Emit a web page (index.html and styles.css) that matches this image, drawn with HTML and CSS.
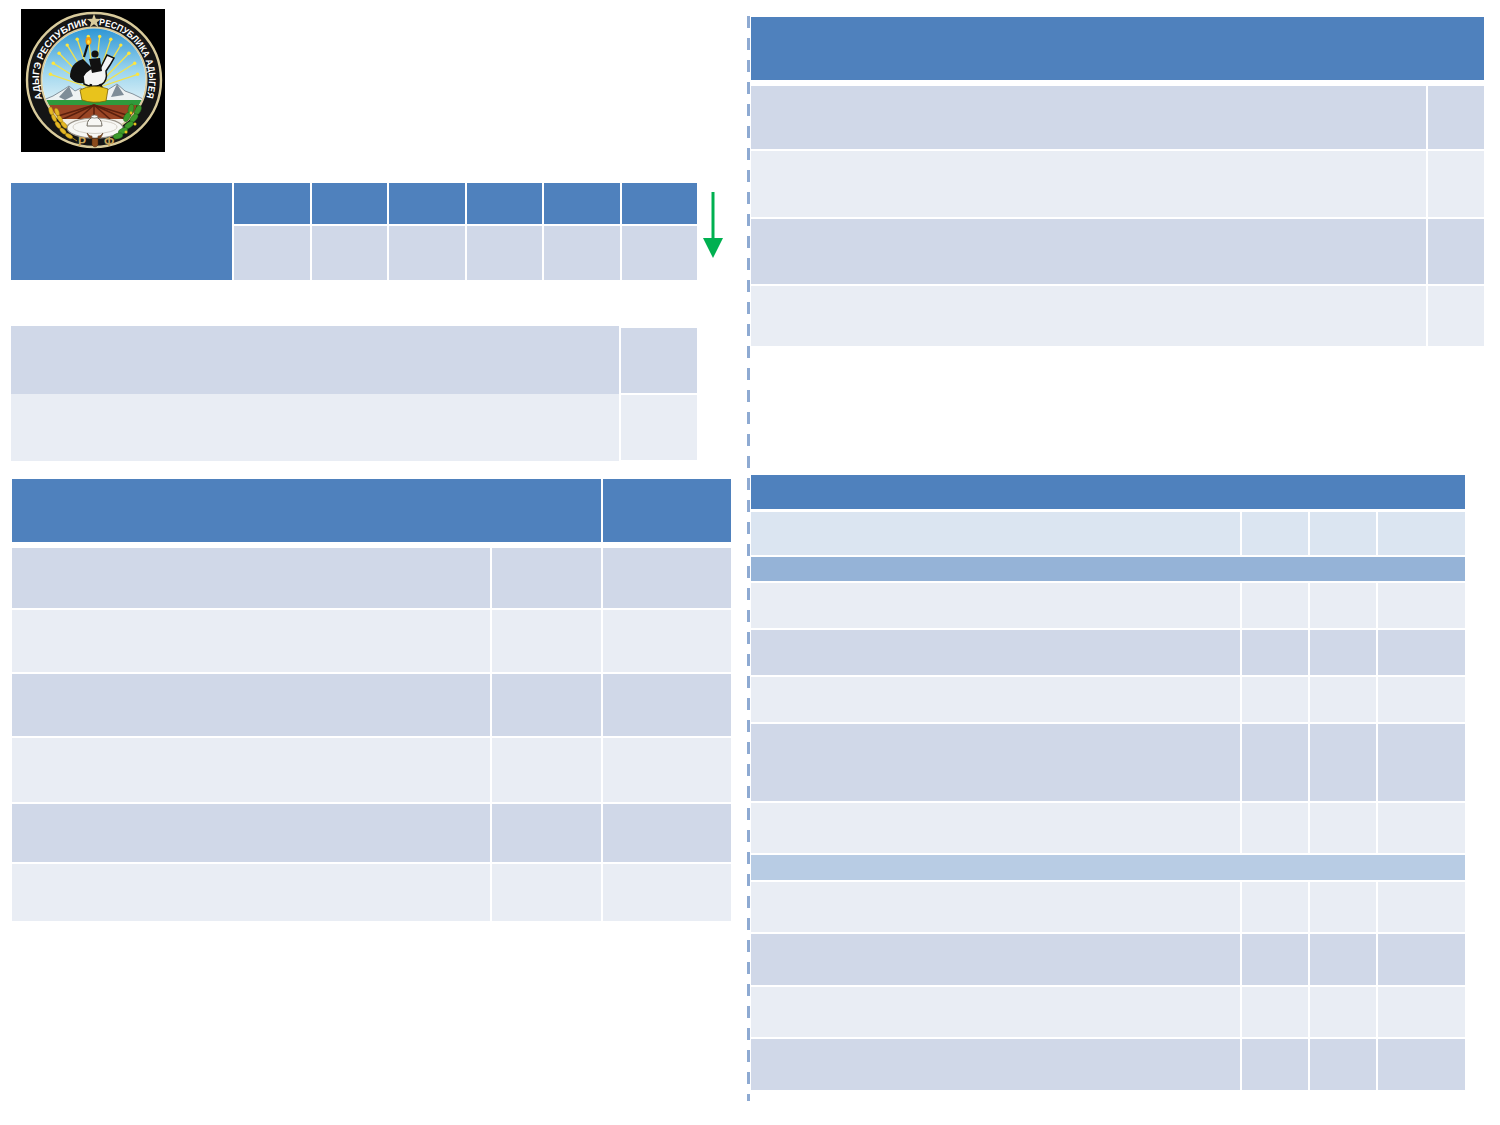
FILE: index.html
```html
<!DOCTYPE html>
<html lang="ru">
<head>
<meta charset="utf-8">
<title>Республика Адыгея</title>
<link rel="stylesheet" href="styles.css">
</head>
<body>
<div class="page">
  <div class="col-left">
    <div class="logo">
      <svg viewBox="0 0 144 143" width="144" height="143">
        <defs>
          <clipPath id="inner"><circle cx="73" cy="71" r="51.5"/></clipPath>
          <linearGradient id="sky" x1="0" y1="0" x2="0" y2="1">
            <stop offset="0" stop-color="#2a94d4"/>
            <stop offset="0.55" stop-color="#9cd5ee"/>
            <stop offset="1" stop-color="#e6f4f8"/>
          </linearGradient>
          <path id="arcL" d="M21.3,89.8 A55,55 0 0 1 68.2,16.2"/>
          <path id="arcR" d="M77.8,16.2 A55,55 0 0 1 124.7,89.8"/>
        </defs>
        <rect width="144" height="143" fill="#000"/>
        <circle cx="73" cy="71" r="67" fill="#151515" stroke="#d9cb9c" stroke-width="2.4"/>
        <circle cx="73" cy="71" r="52.5" fill="#fff" stroke="#d9cb9c" stroke-width="2"/>
        <g clip-path="url(#inner)">
          <rect x="20" y="18" width="106" height="80" fill="url(#sky)"/>
          <g stroke="#f3e24a" stroke-width="1.3">
            <line x1="73" y1="80" x2="29.4" y2="65.3"/>
            <line x1="73" y1="80" x2="32.3" y2="54.2"/>
            <line x1="73" y1="80" x2="38.1" y2="44.2"/>
            <line x1="73" y1="80" x2="46.2" y2="36.1"/>
            <line x1="73" y1="80" x2="56.2" y2="30.3"/>
            <line x1="73" y1="80" x2="67.3" y2="27.4"/>
            <line x1="73" y1="80" x2="78.7" y2="27.4"/>
            <line x1="73" y1="80" x2="89.8" y2="30.3"/>
            <line x1="73" y1="80" x2="99.8" y2="36.1"/>
            <line x1="73" y1="80" x2="107.9" y2="44.2"/>
            <line x1="73" y1="80" x2="113.7" y2="54.2"/>
            <line x1="73" y1="80" x2="116.6" y2="65.3"/>
          </g>
          <g fill="#ffe63a">
            <circle cx="29.4" cy="65.3" r="1.7"/>
            <circle cx="32.3" cy="54.2" r="1.7"/>
            <circle cx="38.1" cy="44.2" r="1.7"/>
            <circle cx="46.2" cy="36.1" r="1.7"/>
            <circle cx="56.2" cy="30.3" r="1.7"/>
            <circle cx="67.3" cy="27.4" r="1.7"/>
            <circle cx="78.7" cy="27.4" r="1.7"/>
            <circle cx="89.8" cy="30.3" r="1.7"/>
            <circle cx="99.8" cy="36.1" r="1.7"/>
            <circle cx="107.9" cy="44.2" r="1.7"/>
            <circle cx="113.7" cy="54.2" r="1.7"/>
            <circle cx="116.6" cy="65.3" r="1.7"/>
          </g>
          <polygon points="20,92 32,87 42,81 48,77 54,82 60,79 66,86 80,85 88,80 96,75 104,82 112,85 126,92" fill="#eef2f3" stroke="#6d7b86" stroke-width="0.8"/>
          <polygon points="38,88 48,77 52,87 44,91" fill="#7f8d98"/>
          <polygon points="90,88 96,75 103,86" fill="#7f8d98"/>
          <rect x="20" y="91" width="106" height="5" fill="#2f9a3c"/>
          <rect x="20" y="96" width="106" height="15" fill="#9a4524"/>
          <g stroke="#5b200e" stroke-width="1.6">
            <line x1="73" y1="96" x2="24" y2="111"/>
            <line x1="73" y1="96" x2="40" y2="111"/>
            <line x1="73" y1="96" x2="56" y2="111"/>
            <line x1="73" y1="96" x2="73" y2="111"/>
            <line x1="73" y1="96" x2="90" y2="111"/>
            <line x1="73" y1="96" x2="106" y2="111"/>
            <line x1="73" y1="96" x2="122" y2="111"/>
          </g>
          <rect x="20" y="110" width="106" height="35" fill="#f2efe8"/>
        </g>
        <!-- table and bowl -->
        <ellipse cx="74" cy="119" rx="28" ry="10" fill="#f7f7f4" stroke="#9a948a" stroke-width="1.2"/>
        <ellipse cx="74" cy="118" rx="22" ry="6.5" fill="none" stroke="#c9c4ba" stroke-width="0.8"/>
        <path d="M66,117 Q66,109 73.5,108 Q81,109 81,117 Z" fill="#f7f7f4" stroke="#6f6a60" stroke-width="1"/>
        <ellipse cx="73.5" cy="107.5" rx="3.2" ry="1.6" fill="#f7f7f4" stroke="#6f6a60" stroke-width="0.8"/>
        <!-- horseman -->
        <line x1="63" y1="48" x2="67" y2="35" stroke="#111" stroke-width="2.2"/>
        <ellipse cx="67.5" cy="32" rx="3" ry="4" fill="#f39c12"/>
        <ellipse cx="67.5" cy="33" rx="1.4" ry="2" fill="#ffe23a"/>
        <path d="M62,50 Q49,54 49,68 Q55,77 66,73 L72,60 Z" fill="#111"/>
        <path d="M62,67 Q68,57 80,58 L86,46 L93,49 L89,56 L85,62 Q87,72 80,76 Q70,79 63,75 Z" fill="#f4f4f4" stroke="#111" stroke-width="1.5"/>
        <path d="M68,50 L79,49 L81,62 L71,64 Z" fill="#111"/>
        <circle cx="74" cy="45" r="3.6" fill="#111"/>
        <path d="M64,65 L54,62 L51,70" fill="none" stroke="#111" stroke-width="2.5"/>
        <path d="M70,75 L68,84 M79,75 L83,84" fill="none" stroke="#111" stroke-width="2.5"/>
        <path d="M59,81 Q72,74 87,80 L85,92 Q72,95 61,91 Z" fill="#e8c31c" stroke="#7d6200" stroke-width="0.8"/>
        <!-- wheat -->
        <path d="M30,98 Q34,120 56,132" fill="none" stroke="#a88414" stroke-width="1"/>
        <g fill="#e5b826" stroke="#9c7a10" stroke-width="0.4">
          <ellipse cx="30" cy="102" rx="2" ry="4" transform="rotate(-15 30 102)"/>
          <ellipse cx="33" cy="109" rx="2" ry="4" transform="rotate(-25 33 109)"/>
          <ellipse cx="37" cy="116" rx="2" ry="4" transform="rotate(-35 37 116)"/>
          <ellipse cx="42" cy="122" rx="2" ry="4" transform="rotate(-45 42 122)"/>
          <ellipse cx="48" cy="127" rx="2" ry="4" transform="rotate(-60 48 127)"/>
          <ellipse cx="36" cy="103" rx="2" ry="4" transform="rotate(-20 36 103)"/>
          <ellipse cx="39" cy="110" rx="2" ry="4" transform="rotate(-30 39 110)"/>
          <ellipse cx="43" cy="116" rx="2" ry="4" transform="rotate(-40 43 116)"/>
        </g>
        <!-- oak -->
        <path d="M116,96 Q112,120 92,132" fill="none" stroke="#1e5a14" stroke-width="1"/>
        <g fill="#3c9a2c" stroke="#1e5a14" stroke-width="0.4">
          <ellipse cx="117" cy="101" rx="2.8" ry="5" transform="rotate(25 117 101)"/>
          <ellipse cx="113" cy="109" rx="2.8" ry="5" transform="rotate(40 113 109)"/>
          <ellipse cx="108" cy="116" rx="2.8" ry="5" transform="rotate(55 108 116)"/>
          <ellipse cx="102" cy="122" rx="2.8" ry="5" transform="rotate(65 102 122)"/>
          <ellipse cx="110" cy="100" rx="2.8" ry="5" transform="rotate(10 110 100)"/>
          <ellipse cx="106" cy="108" rx="2.8" ry="5" transform="rotate(30 106 108)"/>
          <ellipse cx="97" cy="127" rx="2.8" ry="5" transform="rotate(75 97 127)"/>
        </g>
        <g fill="#e8c31c"><circle cx="114" cy="115" r="1.5"/><circle cx="105" cy="123" r="1.5"/><circle cx="110" cy="104" r="1.4"/></g>
        <!-- bull -->
        <path d="M66,124 Q69,128 71,127 L71,136 Q74,140 77,136 L77,127 Q79,128 82,124 Q80,130 77,129.5 L71,129.5 Q68,130 66,124 Z" fill="#8a4b1c" stroke="#4a2608" stroke-width="0.5"/>
        <text x="61" y="137" class="logo-rf">Р</text>
        <text x="88" y="137" class="logo-rf">Ф</text>
        <text class="logo-ring"><textPath href="#arcL" textLength="99" lengthAdjust="spacingAndGlyphs">АДЫГЭ РЕСПУБЛИК</textPath></text>
        <text class="logo-ring"><textPath href="#arcR" textLength="99" lengthAdjust="spacingAndGlyphs">РЕСПУБЛИКА АДЫГЕЯ</textPath></text>
        <polygon points="73,7 74.18,10.38 77.76,10.45 74.9,12.62 75.94,16.05 73,14 70.06,16.05 71.1,12.62 68.24,10.45 71.82,10.38" fill="#d9cb9c" transform="translate(-36.5 -5.7) scale(1.5)"/>
      </svg>
    </div>

    <div class="t1-row">
      <div class="t1">
        <div class="blue span2"></div>
        <div class="blue"></div><div class="blue"></div><div class="blue"></div>
        <div class="blue"></div><div class="blue"></div><div class="blue"></div>
        <div class="mid"></div><div class="mid"></div><div class="mid"></div>
        <div class="mid"></div><div class="mid"></div><div class="mid"></div>
      </div>
      <svg class="arrow" viewBox="0 0 20 66" width="20" height="66">
        <line x1="10" y1="0" x2="10" y2="48" stroke="#00b050" stroke-width="3"/>
        <polygon points="0,46 20,46 10,66" fill="#00b050"/>
      </svg>
    </div>

    <div class="t2">
      <div class="t2-main">
        <div class="mid r1"></div>
        <div class="light r2"></div>
      </div>
      <div class="t2-side">
        <div class="mid"></div>
        <div class="light"></div>
      </div>
    </div>

    <div class="t3">
      <div class="blue hdr wide"></div><div class="blue hdr"></div>
      <div class="mid"></div><div class="mid"></div><div class="mid"></div>
      <div class="light"></div><div class="light"></div><div class="light"></div>
      <div class="mid"></div><div class="mid"></div><div class="mid"></div>
      <div class="light"></div><div class="light"></div><div class="light"></div>
      <div class="mid"></div><div class="mid"></div><div class="mid"></div>
      <div class="light"></div><div class="light"></div><div class="light"></div>
    </div>
  </div>

  <div class="divider"></div>

  <div class="col-right">
    <div class="ta">
      <div class="blue hdr full"></div>
      <div class="mid"></div><div class="mid"></div>
      <div class="light"></div><div class="light"></div>
      <div class="mid"></div><div class="mid"></div>
      <div class="light"></div><div class="light"></div>
    </div>

    <div class="tb">
      <div class="blue hdr full"></div>
      <div class="sub"></div><div class="sub"></div><div class="sub"></div><div class="sub"></div>
      <div class="sec1 full"></div>
      <div class="light"></div><div class="light"></div><div class="light"></div><div class="light"></div>
      <div class="mid"></div><div class="mid"></div><div class="mid"></div><div class="mid"></div>
      <div class="light"></div><div class="light"></div><div class="light"></div><div class="light"></div>
      <div class="mid"></div><div class="mid"></div><div class="mid"></div><div class="mid"></div>
      <div class="light"></div><div class="light"></div><div class="light"></div><div class="light"></div>
      <div class="sec2 full"></div>
      <div class="light"></div><div class="light"></div><div class="light"></div><div class="light"></div>
      <div class="mid"></div><div class="mid"></div><div class="mid"></div><div class="mid"></div>
      <div class="light"></div><div class="light"></div><div class="light"></div><div class="light"></div>
      <div class="mid"></div><div class="mid"></div><div class="mid"></div><div class="mid"></div>
    </div>
  </div>
</div>
</body>
</html>
```

FILE: styles.css
```css
html, body {
  margin: 0;
  padding: 0;
  background: #ffffff;
  font-family: "Liberation Sans", Arial, sans-serif;
}

.page {
  display: flex;
  width: 1500px;
  height: 1125px;
  overflow: hidden;
}

/* colours */
.blue { background: #4f81bd; }
.mid { background: #d0d8e8; }
.light { background: #e9edf4; }
.sub { background: #dbe5f1; }
.sec1 { background: #95b3d7; }
.sec2 { background: #b8cce4; }

/* left column */
.col-left {
  width: 720px;
  padding-left: 11px;
  display: flex;
  flex-direction: column;
  align-items: flex-start;
}

.logo {
  margin: 9px 0 0 10px;
  width: 144px;
  height: 143px;
}
.logo svg { display: block; }

.logo-ring {
  font-family: "Liberation Sans", "DejaVu Sans", sans-serif;
  font-weight: bold;
  font-size: 9.5px;
  fill: #ffffff;
}
.logo-rf {
  font-family: "Liberation Sans", "DejaVu Sans", sans-serif;
  font-weight: bold;
  font-size: 12px;
  fill: #c9a55a;
  text-anchor: middle;
}

.t1-row {
  display: flex;
  align-items: flex-start;
  margin-top: 31px;
}

.t1 {
  width: 686px;
  display: grid;
  grid-template-columns: 221px repeat(6, 1fr);
  grid-template-rows: 41px 54px;
  gap: 2px;
}
.t1 .span2 { grid-row: span 2; }

.arrow {
  display: block;
  margin: 9px 0 0 6px;
}

.t2 {
  width: 686px;
  margin-top: 46px;
  display: flex;
  gap: 2px;
}
.t2-main {
  width: 608px;
  display: flex;
  flex-direction: column;
}
.t2-main .r1 { height: 68px; }
.t2-main .r2 { height: 67px; }
.t2-side {
  flex: 1;
  display: flex;
  flex-direction: column;
  gap: 2px;
  padding-top: 2px;
}
.t2-side div { height: 65px; }

.t3 {
  width: 719px;
  margin: 18px 0 0 1px;
  display: grid;
  grid-template-columns: 478px 109px 128px;
  grid-template-rows: 67px 60px 62px 62px 64px 58px 57px;
  gap: 2px;
}
.t3 .hdr { height: 63px; }
.t3 .wide { grid-column: span 2; }

/* divider */
.divider {
  width: 3px;
  height: 1085px;
  margin: 16px 0 0 16px;
  background: repeating-linear-gradient(to bottom, #8eaad2 0, #8eaad2 12.5px, transparent 12.5px, transparent 22px);
}

/* right column */
.col-right {
  margin-left: 1px;
  display: flex;
  flex-direction: column;
  align-items: flex-start;
}

.full { grid-column: 1 / -1; }

.ta {
  width: 733px;
  margin-top: 17px;
  display: grid;
  grid-template-columns: 675px 56px;
  grid-template-rows: 67px 63px 66px 65px 60px;
  gap: 2px;
}
.ta .hdr { height: 63px; }

.tb {
  width: 714px;
  margin-top: 129px;
  display: grid;
  grid-template-columns: 489px 66px 66px 87px;
  grid-template-rows: 35px 43px 24px 45px 45px 45px 77px 50px 25px 50px 51px 50px 51px;
  gap: 2px;
}
.tb .hdr { height: 34px; }
```
